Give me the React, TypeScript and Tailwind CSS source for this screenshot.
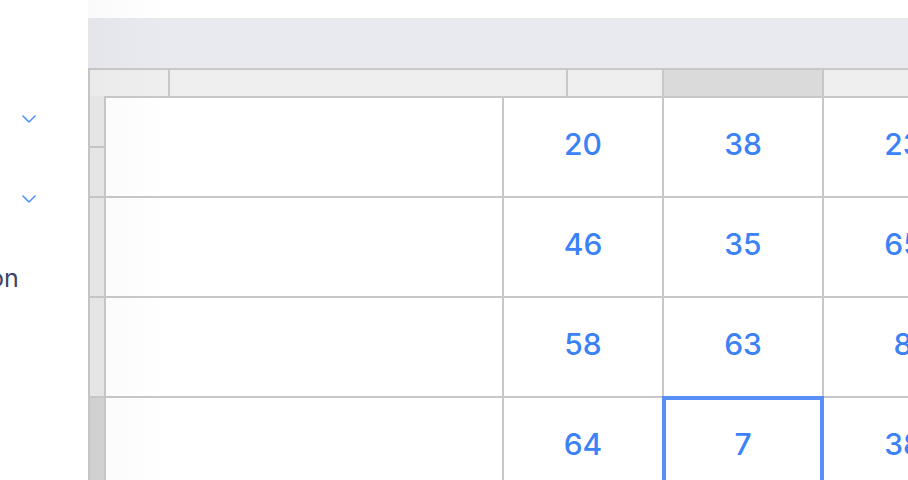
import React from "react";

const Chevron = () => (
  <svg width="14" height="8" viewBox="0 0 14 8" fill="none">
    <path d="M1 1 L7 7 L13 1" stroke="#4a8ff7" strokeWidth="1.5" strokeLinecap="round" strokeLinejoin="round" />
  </svg>
);

const rows = [
  ["20", "38", "23"],
  ["46", "35", "65"],
  ["58", "63", "8"],
  ["64", "7", "38"],
];

const numCls =
  "flex items-center justify-center pb-[6px] text-[30px] font-medium text-[#3b82f6] font-['Inter',sans-serif]";

export default function App() {
  return (
    <div className="w-[908px] h-[480px] flex overflow-hidden bg-white font-['Inter',sans-serif]">
      {/* Sidebar */}
      <div className="w-[88px] shrink-0 flex flex-col bg-white">
        <div className="pt-[115px] pl-[22px]">
          <Chevron />
        </div>
        <div className="mt-[72px] pl-[22px]">
          <Chevron />
        </div>
        <div className="mt-[63px] -ml-[11px] text-[25px] leading-[25px] text-[#3b4468] whitespace-nowrap">
          on
        </div>
      </div>

      {/* Main */}
      <div className="flex-1 flex flex-col relative min-w-0">
        <div className="h-[18px] bg-white shrink-0" />
        <div className="h-[50px] bg-[#e9e9f0] shrink-0" />
        <div className="flex-1 flex flex-col border-t-2 border-l-2 border-[#c8c8c8] min-h-0">
          {/* column header */}
          <div className="h-[26px] flex shrink-0 bg-[#efefef]">
            <div className="w-[78px] shrink-0" />
            <div className="w-[398px] shrink-0 border-l-2 border-[#c8c8c8]" />
            <div className="w-[96px] shrink-0 border-l-2 border-[#c8c8c8]" />
            <div className="w-[160px] shrink-0 border-l-2 border-[#c8c8c8] bg-[#dadada]" />
            <div className="w-[160px] shrink-0 border-l-2 border-[#c8c8c8]" />
          </div>
          {/* body */}
          <div className="flex-1 flex min-h-0">
            <div className="w-[14px] shrink-0 flex flex-col">
              <div className="h-[50px] bg-[#e9e9e9]" />
              <div className="h-[50px] border-t-2 border-[#c8c8c8] bg-[#e9e9e9]" />
              <div className="h-[100px] border-t-2 border-[#c8c8c8] bg-[#e9e9e9]" />
              <div className="h-[100px] border-t-2 border-[#c8c8c8] bg-[#e9e9e9]" />
              <div className="flex-1 border-t-2 border-[#c8c8c8] bg-[#d4d4d4]" />
            </div>
            <div className="flex-1 flex flex-col border-l-2 border-t-2 border-[#c8c8c8] min-w-0">
              {rows.map((r, i) => (
                <div
                  key={i}
                  className={
                    "flex shrink-0 " + (i === 0 ? "h-[98px]" : "h-[100px] border-t-2 border-[#c8c8c8]")
                  }
                >
                  <div className="w-[396px] shrink-0 bg-white" />
                  <div className={"w-[160px] shrink-0 border-l-2 border-[#c8c8c8] bg-white " + numCls}>
                    {r[0]}
                  </div>
                  <div className={"w-[160px] shrink-0 border-l-2 border-[#c8c8c8] bg-white relative " + numCls}>
                    {i === 3 && (
                      <div className="absolute -left-[2px] -top-[2px] w-[162px] h-[104px] border-4 border-[#5a8ef7]" />
                    )}
                    {r[1]}
                  </div>
                  <div className={"w-[160px] shrink-0 border-l-2 border-[#c8c8c8] bg-white " + numCls}>
                    {r[2]}
                  </div>
                </div>
              ))}
            </div>
          </div>
        </div>
        <div className="absolute left-0 top-0 bottom-0 w-[80px] pointer-events-none bg-gradient-to-r from-[rgba(0,0,0,0.02)] to-transparent" />
      </div>
    </div>
  );
}
